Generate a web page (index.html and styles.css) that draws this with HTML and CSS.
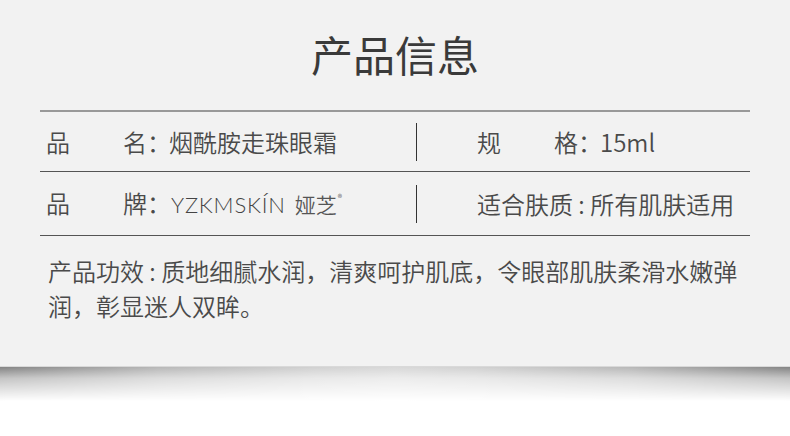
FILE: index.html
```html
<!DOCTYPE html>
<html lang="zh-CN">
<head>
    <meta charset="UTF-8">
    <meta name="viewport" content="width=device-width, initial-scale=1.0">
    <title>产品信息</title>
    <link rel="stylesheet" href="styles.css">
</head>
<body>
    <div class="panel">
        <h1 class="title">产品信息</h1>

        <div class="info">
            <div class="row row-first">
                <div class="cell cell-left">
                    <span class="label"><span>品</span><span>名</span></span><span class="colon">：</span>烟酰胺走珠眼霜
                </div>
                <div class="divider"></div>
                <div class="cell cell-right">
                    <span class="label"><span>规</span><span>格</span></span><span class="colon">：</span>15ml
                </div>
            </div>

            <div class="row row-second">
                <div class="cell cell-left">
                    <span class="label"><span>品</span><span>牌</span></span><span class="colon">：</span><span class="brand">YZKMSKÍN</span><span class="brand-cn">娅芝<sup>®</sup></span>
                </div>
                <div class="divider"></div>
                <div class="cell cell-right">
                    适合肤质 : 所有肌肤适用
                </div>
            </div>

            <p class="effect">产品功效 : 质地细腻水润，清爽呵护肌底，令眼部肌肤柔滑水嫩弹润，彰显迷人双眸。</p>
        </div>
    </div>
    <div class="panel-shadow"></div>
</body>
</html>
```

FILE: styles.css
```css
body {
    margin: 0;
    padding: 0;
    background-color: #ffffff;
    font-family: "Noto Sans CJK SC", "Noto Sans", sans-serif;
    font-weight: 350;
    color: #4a4a4a;
}

.panel {
    background-color: #f2f2f2;
    height: 366px;
    overflow: hidden;
}

.title {
    margin: 0;
    padding-top: 32px;
    height: 44px;
    margin-bottom: 34px;
    text-align: center;
    font-size: 42px;
    line-height: 44px;
    font-weight: 400;
    color: #3a3a3a;
}

.info {
    width: 710px;
    margin: 0 auto;
    border-top: 2px solid #999;
}

.row {
    display: flex;
    align-items: center;
    border-bottom: 1px solid #555;
    font-size: 24px;
    line-height: 30px;
}

.row-first {
    height: 59px;
}

.row-second {
    height: 63px;
}

.cell {
    white-space: nowrap;
}

.cell-left {
    width: 370px;
    padding-left: 6px;
}

.cell-right {
    padding-left: 60px;
}

.divider {
    width: 1px;
    height: 38px;
    background-color: #333;
}

.label {
    display: inline-flex;
    justify-content: space-between;
    width: 101px;
}

.colon {
    display: inline-block;
    width: 22px;
}

.brand {
    font-family: "Lato", "Noto Sans", sans-serif;
    font-weight: 300;
    font-size: 22px;
    letter-spacing: 0.8px;
    color: #444;
    margin-left: 2px;
}

.brand-cn {
    margin-left: 9px;
    font-size: 21px;
    color: #555;
}

.brand-cn sup {
    font-size: 9px;
    line-height: 0;
    vertical-align: 12px;
    margin-left: 1px;
}

.effect {
    margin: 0;
    padding: 17px 0 0 8px;
    font-size: 24px;
    line-height: 35px;
    color: #4a4a4a;
}

.panel-shadow {
    height: 34px;
    border-top: 1px solid #d8d8d8;
    background: linear-gradient(to right, #7e7e7e 0%, #b4b4b4 20%, #cfcfcf 40%, #d6d6d6 50%, #cfcfcf 60%, #b4b4b4 80%, #7e7e7e 100%);
    -webkit-mask-image: linear-gradient(to bottom, #000 0%, rgba(0, 0, 0, 0.45) 35%, transparent 100%);
    mask-image: linear-gradient(to bottom, #000 0%, rgba(0, 0, 0, 0.45) 35%, transparent 100%);
}
```
